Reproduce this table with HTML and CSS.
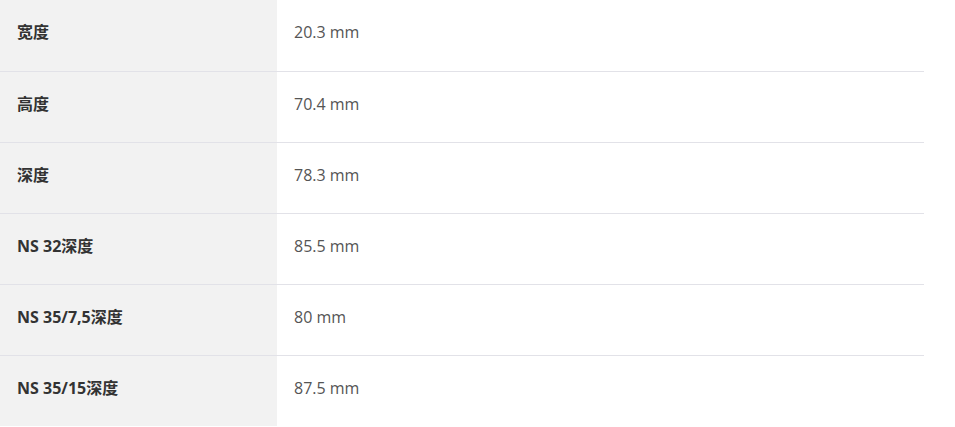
FILE: index.html
```html
<!DOCTYPE html>
<html lang="zh">
<head>
<meta charset="utf-8">
<link rel="stylesheet" href="styles.css">
</head>
<body>
<table class="spec">
  <tbody>
    <tr><th>宽度</th><td>20.3 mm</td></tr>
    <tr><th>高度</th><td>70.4 mm</td></tr>
    <tr><th>深度</th><td>78.3 mm</td></tr>
    <tr><th>NS 32深度</th><td>85.5 mm</td></tr>
    <tr><th>NS 35/7,5深度</th><td>80 mm</td></tr>
    <tr><th>NS 35/15深度</th><td>87.5 mm</td></tr>
  </tbody>
</table>
</body>
</html>
```

FILE: styles.css
```css
html, body {
  margin: 0;
  padding: 0;
  background: #ffffff;
}
body {
  font-family: "Open Sans", "Noto Sans CJK SC", sans-serif;
  font-size: 16px;
}
.spec {
  width: 924px;
  border-collapse: collapse;
}
.spec tr {
  border-bottom: 1px solid #e2e2e8;
}
.spec tr:last-child {
  border-bottom: none;
}
.spec th,
.spec td {
  height: 71px;
  box-sizing: border-box;
  padding: 21px 17px 27px;
  line-height: 22px;
  text-align: left;
  vertical-align: top;
}
.spec th {
  width: 277px;
  background: #f2f2f2;
  color: #333333;
  font-weight: 700;
}
.spec td {
  color: #555555;
  font-weight: 400;
}
```
